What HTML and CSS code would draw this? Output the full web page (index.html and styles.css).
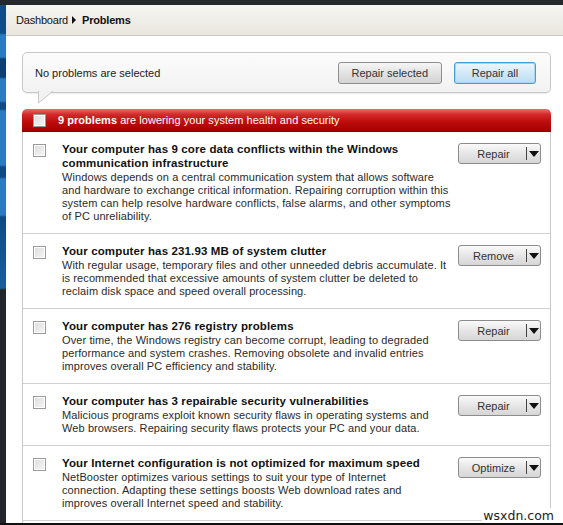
FILE: index.html
```html
<!DOCTYPE html>
<html lang="en">

<head>
    <meta charset="UTF-8">
    <title>Problems</title>
    <link rel="stylesheet" href="styles.css">
</head>

<body>
    <div class="topbar"></div>
    <div class="frame">
        <div class="sidebar"></div>
        <div class="main">
            <div class="crumbs">
                <span>Dashboard</span>
                <span class="crumb-arrow"></span>
                <b>Problems</b>
            </div>

            <div class="content">
                <div class="callout">
                    <span>No problems are selected</span>
                    <div class="callout-buttons">
                        <button class="btn">Repair selected</button>
                        <button class="btn btn-blue">Repair all</button>
                    </div>
                    <svg class="callout-tail" width="18" height="13" viewBox="0 0 18 13">
                        <path d="M0.5 0 L0.5 12 L15 0" fill="#f2f2f2" stroke="#c8c8c8" />
                        <path d="M1.5 -1 L1.5 9.5 L14 -1 Z" fill="#f2f2f2" />
                    </svg>
                </div>

                <div class="alert-bar">
                    <span class="check"></span>
                    <span><b>9 problems</b> are lowering your system health and security</span>
                </div>

                <div class="problems">
                    <div class="problem">
                        <span class="check"></span>
                        <div class="problem-text">
                            <h3>Your computer has 9 core data conflicts within the Windows<br>communication infrastructure</h3>
                            <p>Windows depends on a central communication system that allows software<br>
                                and hardware to exchange critical information. Repairing corruption within this<br>
                                system can help resolve hardware conflicts, false alarms, and other symptoms<br>
                                of PC unreliability.</p>
                        </div>
                        <div class="split-btn"><span>Repair</span><i></i></div>
                    </div>
                    <div class="problem">
                        <span class="check"></span>
                        <div class="problem-text">
                            <h3>Your computer has 231.93 MB of system clutter</h3>
                            <p>With regular usage, temporary files and other unneeded debris accumulate. It<br>
                                is recommended that excessive amounts of system clutter be deleted to<br>
                                reclaim disk space and speed overall processing.</p>
                        </div>
                        <div class="split-btn"><span>Remove</span><i></i></div>
                    </div>
                    <div class="problem">
                        <span class="check"></span>
                        <div class="problem-text">
                            <h3>Your computer has 276 registry problems</h3>
                            <p>Over time, the Windows registry can become corrupt, leading to degraded<br>
                                performance and system crashes. Removing obsolete and invalid entries<br>
                                improves overall PC efficiency and stability.</p>
                        </div>
                        <div class="split-btn"><span>Repair</span><i></i></div>
                    </div>
                    <div class="problem">
                        <span class="check"></span>
                        <div class="problem-text">
                            <h3>Your computer has 3 repairable security vulnerabilities</h3>
                            <p>Malicious programs exploit known security flaws in operating systems and<br>
                                Web browsers. Repairing security flaws protects your PC and your data.</p>
                        </div>
                        <div class="split-btn"><span>Repair</span><i></i></div>
                    </div>
                    <div class="problem">
                        <span class="check"></span>
                        <div class="problem-text">
                            <h3>Your Internet configuration is not optimized for maximum speed</h3>
                            <p>NetBooster optimizes various settings to suit your type of Internet<br>
                                connection. Adapting these settings boosts Web download rates and<br>
                                improves overall Internet speed and stability.</p>
                        </div>
                        <div class="split-btn"><span>Optimize</span><i></i></div>
                    </div>
                    <div class="problem"></div>
                </div>
            </div>
        </div>
    </div>
    <div class="bottombar"></div>
    <div class="watermark">wsxdn.com</div>
</body>

</html>
```

FILE: styles.css
```css
* {
    box-sizing: border-box;
}

body {
    margin: 0;
    height: 525px;
    overflow: hidden;
    display: flex;
    flex-direction: column;
    background: #fff;
    font-family: "Liberation Sans", Arial, sans-serif;
    font-size: 11px;
    color: #222;
    position: relative;
}

.topbar {
    height: 5px;
    background: #25292d;
    flex: none;
}

.bottombar {
    height: 2px;
    background: #111;
    flex: none;
}

.frame {
    flex: 1;
    display: flex;
    overflow: hidden;
}

.sidebar {
    width: 6px;
    flex: none;
    background: linear-gradient(#0f4c88 0, #0f4c88 28px, #2a7ac4 30px, #2a7ac4 52px, #0d3f74 54px, #0d3f74 72px,
            #2a7ac4 74px, #2a7ac4 96px, #0e4a85 98px, #0e4a85 104px, #2a7ac4 106px, #2a7ac4 160px,
            #0e4a85 162px, #0e4a85 172px, #2a7ac4 174px, #2a7ac4 210px, #0e4a85 212px, #1a5e9e 283px,
            #22262a 285px, #22262a 100%);
}

.main {
    flex: 1;
    display: flex;
    flex-direction: column;
    background: #fff;
}

.crumbs {
    height: 31px;
    flex: none;
    display: flex;
    align-items: center;
    gap: 4px;
    padding: 0 0 1px 10px;
    background: linear-gradient(#f7f5f1, #e9e6df);
    border-bottom: 1px solid #cdc8bf;
    font-size: 11px;
    letter-spacing: -0.2px;
    color: #111;
}

.crumb-arrow {
    width: 0;
    height: 0;
    border-top: 4px solid transparent;
    border-bottom: 4px solid transparent;
    border-left: 4px solid #111;
    margin: 0 2px 0 0;
}

.content {
    padding: 16px 12px 0 16px;
}

.callout {
    position: relative;
    height: 41px;
    display: flex;
    align-items: center;
    justify-content: space-between;
    padding: 0 14px 0 12px;
    border: 1px solid #c8c8c8;
    border-radius: 5px;
    background: linear-gradient(#fcfcfc, #f2f2f2);
    box-shadow: 0 1px 1px rgba(0, 0, 0, 0.08);
}

.callout-tail {
    position: absolute;
    left: 15px;
    bottom: -12px;
}

.callout-buttons {
    display: flex;
    gap: 12px;
}

.btn {
    height: 22px;
    padding: 0 13px;
    font-family: inherit;
    font-size: 11px;
    color: #333;
    border: 1px solid #8e8e8e;
    border-radius: 3px;
    background: linear-gradient(#f6f6f6, #e2e2e2 50%, #d4d4d4);
}

.btn-blue {
    width: 82px;
    border-color: #3c9fd8;
    background: linear-gradient(#eef7fd, #d2e9f8 50%, #bcdcf2);
    box-shadow: inset 0 0 0 1px #a6d6f2;
}

.alert-bar {
    margin-top: 16px;
    height: 23px;
    display: flex;
    align-items: center;
    gap: 12px;
    padding-left: 11px;
    border-radius: 5px 5px 0 0;
    background: linear-gradient(#ea6b6b, #d42a2a 25%, #c10d0d 55%, #a40000);
    border-bottom: 1px solid #8e0000;
    color: #fff;
    font-size: 11px;
    letter-spacing: 0.04px;
    width: 529px;
}

.alert-bar .check {
    margin-top: 1px;
}

.check {
    width: 13px;
    height: 13px;
    flex: none;
    border: 1px solid #9a9a9a;
    background: linear-gradient(135deg, #dcdcdc, #f6f6f6);
    box-shadow: inset 0 0 0 1px #fff;
}

.problems {
    width: 529px;
    border-left: 1px solid #c8c8c8;
    border-right: 1px solid #c8c8c8;
}

.problem {
    display: flex;
    align-items: flex-start;
    padding: 10px 9px 10px 10px;
    border-bottom: 1px solid #d2d2d2;
}

.problem .check {
    margin-top: 2px;
}

.problem-text {
    width: 390px;
    margin-left: 16px;
    white-space: nowrap;
}

.problem-text h3 {
    margin: 0 0 1px;
    font-size: 11.5px;
    line-height: 14px;
    letter-spacing: 0.13px;
    color: #111;
}

.problem-text p {
    margin: 0;
    line-height: 13px;
    letter-spacing: 0.1px;
    color: #2a2a2a;
}

.split-btn {
    margin: 1px 0 0 auto;
    width: 83px;
    height: 21px;
    flex: none;
    display: flex;
    border: 1px solid #8c8c8c;
    border-radius: 3px;
    background: linear-gradient(#fafafa, #e6e6e6 50%, #d6d6d6);
    color: #333;
}

.split-btn span {
    flex: 1;
    display: flex;
    align-items: center;
    justify-content: center;
    padding-left: 2px;
}

.split-btn i {
    width: 14px;
    position: relative;
    border-left: 1px solid #444;
    margin: 3px 0;
}

.split-btn i::after {
    content: "";
    position: absolute;
    left: 2px;
    top: 4px;
    border-left: 5px solid transparent;
    border-right: 5px solid transparent;
    border-top: 6px solid #111;
}

.watermark {
    position: absolute;
    right: 8px;
    bottom: 2px;
    font-family: "DejaVu Sans", sans-serif;
    font-size: 12.5px;
    color: #222;
    background: #fff;
    padding: 0 1px;
}
```
